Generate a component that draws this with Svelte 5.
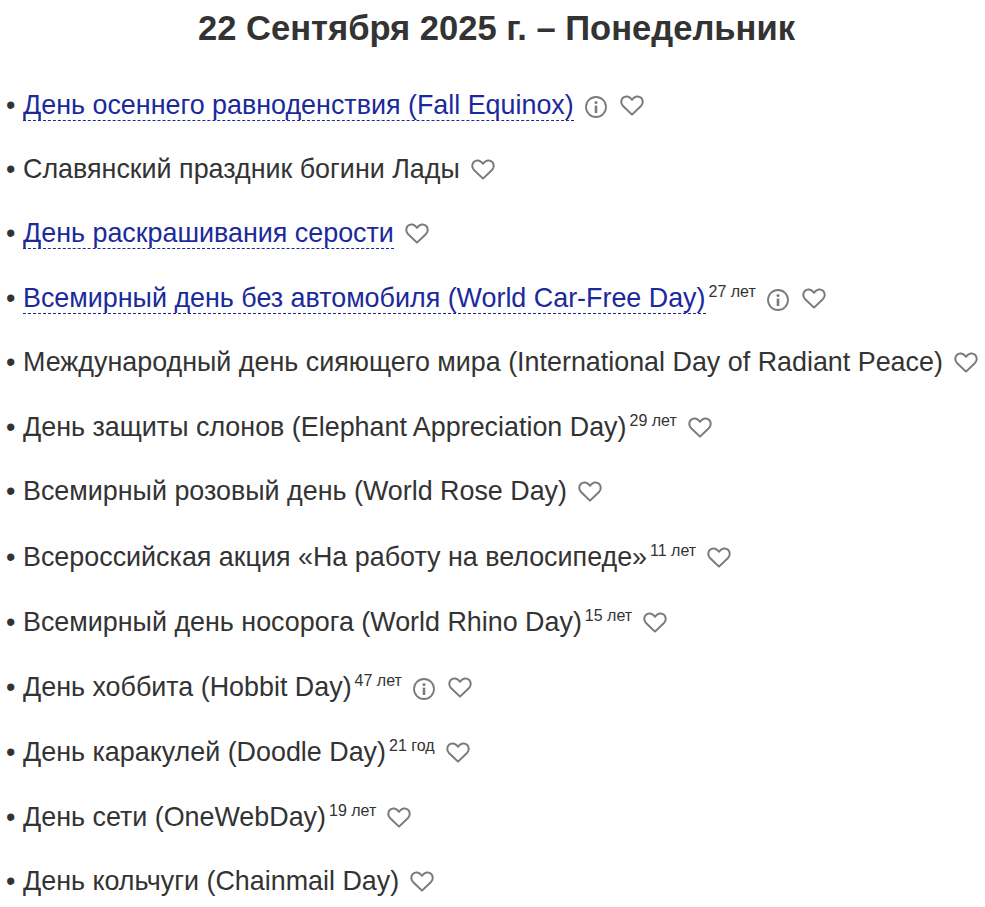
<script lang="ts">
	interface Holiday {
		title: string;
		link?: boolean;
		years?: string;
		info?: boolean;
	}

	const holidays: Holiday[] = [
		{ title: 'День осеннего равноденствия (Fall Equinox)', link: true, info: true },
		{ title: 'Славянский праздник богини Лады' },
		{ title: 'День раскрашивания серости', link: true },
		{ title: 'Всемирный день без автомобиля (World Car-Free Day)', link: true, years: '27 лет', info: true },
		{ title: 'Международный день сияющего мира (International Day of Radiant Peace)' },
		{ title: 'День защиты слонов (Elephant Appreciation Day)', years: '29 лет' },
		{ title: 'Всемирный розовый день (World Rose Day)' },
		{ title: 'Всероссийская акция «На работу на велосипеде»', years: '11 лет' },
		{ title: 'Всемирный день носорога (World Rhino Day)', years: '15 лет' },
		{ title: 'День хоббита (Hobbit Day)', years: '47 лет', info: true },
		{ title: 'День каракулей (Doodle Day)', years: '21 год' },
		{ title: 'День сети (OneWebDay)', years: '19 лет' },
		{ title: 'День кольчуги (Chainmail Day)' }
	];
</script>

<main class="page">
	<h1>22 Сентября 2025 г. – Понедельник</h1>
	<ul class="list">
		{#each holidays as item}
			<li class="row"><span class="bullet">•</span>{#if item.link}<a href="#top" class="link">{item.title}</a>{:else}<span>{item.title}</span>{/if}{#if item.years}<sup class="years">{item.years}</sup>{/if}{#if item.info}<svg class="icon info" width="22" height="22" viewBox="0 0 22 22" aria-hidden="true">
						<circle cx="11" cy="11" r="10" fill="none" stroke="#7a7a7a" stroke-width="1.8" />
						<circle cx="11" cy="6.6" r="1.5" fill="#7a7a7a" />
						<rect x="9.7" y="9.6" width="2.6" height="7.4" fill="#7a7a7a" />
					</svg>{/if}<svg class="icon heart" width="24" height="21" viewBox="0 0 24 21" aria-hidden="true">
					<path
						d="M12 19.6 L3 11 C0.6 8.5 0.8 4.8 3 2.8 C5.3 0.7 9.4 0.9 12 4.8 C14.6 0.9 18.7 0.7 21 2.8 C23.2 4.8 23.4 8.5 21 11 Z"
						fill="none"
						stroke="#7a7a7a"
						stroke-width="2"
						stroke-linejoin="round"
					/>
				</svg></li>
		{/each}
	</ul>
</main>

<style>
	:global(body) {
		background: #fff;
	}
	.page {
		font-family: 'Liberation Sans', Arial, sans-serif;
		color: #333;
		font-size: 26.88px;
	}
	h1 {
		margin: 0;
		padding: 8px 0 0 8px;
		font-size: 34.56px;
		line-height: 40px;
		font-weight: bold;
		text-align: center;
		color: #333;
	}
	.list {
		list-style: none;
		margin: 42px 0 0;
		padding: 0 0 0 6px;
	}
	.row {
		margin-bottom: 33.1px;
		white-space: nowrap;
	}
	.bullet {
		display: inline-block;
		width: 17px;
	}
	.link {
		color: #1a2a9c;
		text-decoration: none;
		border-bottom: 1px dashed #1a2a9c;
	}
	.years {
		font-size: 16px;
		line-height: 20px;
		margin-left: 3px;
	}
	.icon {
		vertical-align: -4px;
		margin-left: 11px;
	}
	.info {
		margin-right: 2px;
	}
	.heart {
		vertical-align: -2px;
	}
</style>
